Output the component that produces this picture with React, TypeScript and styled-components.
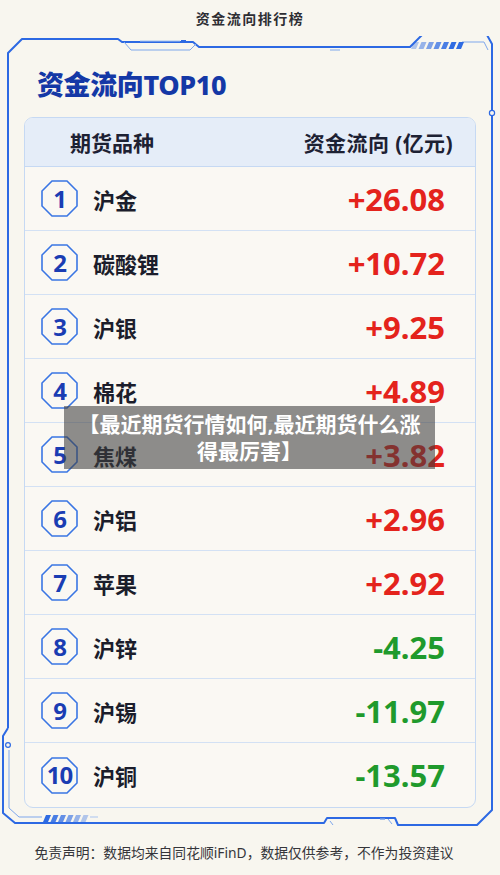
import React from "react";
import styled, { createGlobalStyle } from "styled-components";

const GlobalStyle = createGlobalStyle`
  html, body { margin: 0; padding: 0; background: #f8f6ef; }
  * { box-sizing: border-box; }
`;

const FONT = `"Noto Sans", "Noto Sans CJK SC", sans-serif`;

const Page = styled.div`
  position: relative;
  width: 500px;
  height: 875px;
  overflow: hidden;
  display: flex;
  flex-direction: column;
  background: #f8f6ef;
  font-family: ${FONT};
`;

const TopTitle = styled.div`
  height: 36px;
  display: flex;
  align-items: center;
  justify-content: center;
  font-size: 14px;
  font-weight: 700;
  letter-spacing: 1.5px;
  color: #2e2e33;
`;

const FrameSection = styled.div`
  position: relative;
  height: 794px;
  padding: 19px 24px 0;
`;

const FrameSvg = styled.svg`
  position: absolute;
  left: 0;
  top: 0;
  width: 500px;
  height: 794px;
  pointer-events: none;
`;

const BigTitle = styled.h1`
  position: relative;
  margin: 0 0 6px 13px;
  height: 56px;
  display: flex;
  align-items: center;
  font-size: 27px;
  font-weight: 800;
  letter-spacing: -0.4px;
  color: #1438a6;
`;

const Table = styled.div`
  position: relative;
  width: 452px;
  border: 1px solid #c6d9f3;
  border-radius: 9px;
  overflow: hidden;
  background: #faf8f3;
`;

const HeaderRow = styled.div`
  height: 49px;
  display: flex;
  align-items: center;
  justify-content: space-between;
  padding: 0 22px 0 45px;
  background: #e5edf8;
  border-bottom: 1px solid #c6d9f3;
  font-size: 21px;
  font-weight: 700;
  color: #1d2133;
`;

const HeadRight = styled.span`
  letter-spacing: 0.4px;
`;

const Row = styled.div<{ $last?: boolean }>`
  height: 64px;
  display: flex;
  align-items: center;
  padding: 0 30px 0 16px;
  border-bottom: ${(p) => (p.$last ? "none" : "1px solid #d3e1f4")};
`;

const Badge = styled.div`
  position: relative;
  width: 37px;
  height: 37px;
  flex: none;
  display: flex;
  align-items: center;
  justify-content: center;
  font-size: 24px;
  font-weight: 700;
  color: #1a3db3;
  letter-spacing: -1px;
`;

const BadgeShape = styled.svg`
  position: absolute;
  inset: 0;
  width: 37px;
  height: 37px;
`;

const BadgeNum = styled.span`
  position: relative;
  line-height: 1;
`;

const Name = styled.div`
  margin-left: 15px;
  flex: 1;
  font-size: 22px;
  font-weight: 700;
  color: #1b1d2b;
`;

const Value = styled.div<{ $neg?: boolean }>`
  font-size: 31px;
  font-weight: 700;
  color: ${(p) => (p.$neg ? "#1f9a2c" : "#e4231c")};
`;

const Overlay = styled.div`
  position: absolute;
  left: 64px;
  top: 406px;
  width: 371px;
  height: 63px;
  background: rgba(62, 62, 62, 0.58);
  display: flex;
  align-items: center;
  justify-content: center;
  text-align: center;
  white-space: nowrap;
  font-size: 21px;
  line-height: 27px;
  font-weight: 700;
  color: #ffffff;
`;

const Footer = styled.div`
  flex: 1;
  display: flex;
  align-items: center;
  justify-content: center;
  font-size: 13.8px;
  color: #35353a;
  padding: 0 12px 1px 0;
`;

const rows = [
  { n: "1", name: "沪金", v: "+26.08" },
  { n: "2", name: "碳酸锂", v: "+10.72" },
  { n: "3", name: "沪银", v: "+9.25" },
  { n: "4", name: "棉花", v: "+4.89" },
  { n: "5", name: "焦煤", v: "+3.82" },
  { n: "6", name: "沪铝", v: "+2.96" },
  { n: "7", name: "苹果", v: "+2.92" },
  { n: "8", name: "沪锌", v: "-4.25" },
  { n: "9", name: "沪锡", v: "-11.97" },
  { n: "10", name: "沪铜", v: "-13.57" },
];

const Octagon = () => (
  <BadgeShape viewBox="0 0 37 37">
    <polygon
      points="11,1 26,1 36,11 36,26 26,36 11,36 1,26 1,11"
      fill="none"
      stroke="#3a76e4"
      strokeWidth="1.6"
    />
  </BadgeShape>
);

// frame drawn in coordinates: page y minus 36
const o = 36;
const P = (x: number, y: number) => `${x},${y - o}`;

const Stripes = ({ x0, y0, y1, n, w, gap, rev }: { x0: number; y0: number; y1: number; n: number; w: number; gap: number; rev?: boolean }) => (
  <g>
    {Array.from({ length: n }).map((_, i) => {
      const x = x0 + i * (w + gap);
      const op = rev ? 1 - i * 0.13 : 0.35 + i * 0.13;
      return (
        <polygon
          key={i}
          points={`${P(x + 3, y0)} ${P(x + 3 + w, y0)} ${P(x + w, y1)} ${P(x, y1)}`}
          fill="#2f6be2"
          opacity={op}
        />
      );
    })}
  </g>
);

const Frame = () => (
  <FrameSvg viewBox="0 0 500 794">
    <polyline
      fill="none"
      stroke="#2d69e3"
      strokeWidth="2"
      strokeLinejoin="round"
      points={[
        P(8, 728),
        P(8, 53),
        P(22, 39),
        P(118, 39),
        P(122, 42),
        P(193, 42),
        P(199, 47),
        P(410, 47),
        P(422, 35),
        P(487, 35),
        P(492, 44),
        P(492, 810),
        P(477, 825),
        P(398, 825),
        P(395, 818),
        P(327, 818),
        P(324, 823),
        P(15, 823),
        P(3, 813),
        P(3, 736),
        P(8, 728),
      ].join(" ")}
    />
    <polyline
      fill="none"
      stroke="#7fa7ec"
      strokeWidth="1"
      points={[P(124, 42), P(131, 50), P(190, 50), P(196, 44)].join(" ")}
    />
    <line x1="140" y1={41 - o} x2="180" y2={41 - o} stroke="#a9c4f1" strokeWidth="1" />
    <rect x="181" y={40 - o} width="5" height="2" fill="#2d69e3" />
    <line x1="330" y1={50 - o} x2="340" y2={50 - o} stroke="#7fa7ec" strokeWidth="1" />
    <polyline
      fill="none"
      stroke="#7fa7ec"
      strokeWidth="1"
      points={[P(462, 42), P(484, 42), P(488, 50)].join(" ")}
    />
    <Stripes x0={411} y0={42} y1={49} n={7} w={5} gap={2.5} />
    <circle cx="492" cy={113 - o} r="2.6" fill="#f8f6ef" stroke="#2d69e3" strokeWidth="1.2" />
    <circle cx="8" cy={745 - o} r="2.4" fill="#f8f6ef" stroke="#2d69e3" strokeWidth="1.2" />
    <polyline
      fill="none"
      stroke="#7fa7ec"
      strokeWidth="1"
      points={[P(9, 750), P(9, 808), P(19, 817), P(42, 817)].join(" ")}
    />
    <Stripes x0={43} y0={815} y1={822} n={6} w={5} gap={2.5} rev />
    <line x1="90" y1={817 - o} x2="98" y2={817 - o} stroke="#a9c4f1" strokeWidth="1" />
    <polyline fill="none" stroke="#7fa7ec" strokeWidth="1" points={[P(330, 821), P(333, 825)].join(" ")} />
    <polyline fill="none" stroke="#7fa7ec" strokeWidth="1" points={[P(388, 819), P(392, 824)].join(" ")} />
    <rect x="380" y={818 - o} width="5" height="1.6" fill="#5d8fe8" />
  </FrameSvg>
);

export default function App() {
  return (
    <>
      <GlobalStyle />
      <Page>
        <TopTitle>资金流向排行榜</TopTitle>
        <FrameSection>
          <Frame />
          <BigTitle>资金流向TOP10</BigTitle>
          <Table>
            <HeaderRow>
              <span>期货品种</span>
              <HeadRight>资金流向 (亿元)</HeadRight>
            </HeaderRow>
            {rows.map((r, i) => (
              <Row key={r.n} $last={i === rows.length - 1}>
                <Badge>
                  <Octagon />
                  <BadgeNum>{r.n}</BadgeNum>
                </Badge>
                <Name>{r.name}</Name>
                <Value $neg={r.v.startsWith("-")}>{r.v}</Value>
              </Row>
            ))}
          </Table>
        </FrameSection>
        <Footer>免责声明：数据均来自同花顺iFinD，数据仅供参考，不作为投资建议</Footer>
        <Overlay>
          【最近期货行情如何,最近期货什么涨
          <br />
          得最厉害】
        </Overlay>
      </Page>
    </>
  );
}
